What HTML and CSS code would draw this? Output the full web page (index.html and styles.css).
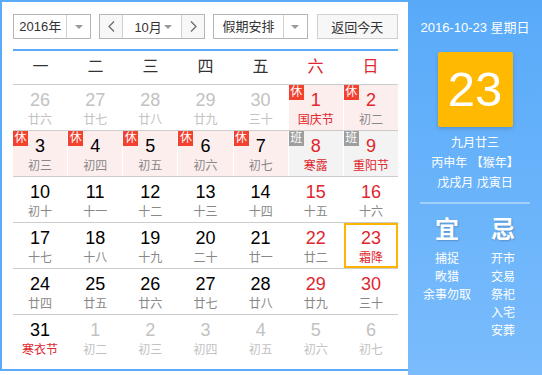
FILE: index.html
```html
<!DOCTYPE html>
<html lang="zh">
<head>
<meta charset="utf-8">
<link rel="stylesheet" href="styles.css">
</head>
<body>
<div class="widget">
  <div class="main">
    <div class="toolbar">
      <div class="select year">
        <span class="sel-text">2016年</span>
        <span class="sel-arrow"><i class="tri"></i></span>
      </div>
      <div class="month-group">
        <span class="nav-btn"><svg width="7" height="11" viewBox="0 0 7 11"><polyline points="6,0.5 1,5.5 6,10.5" fill="none" stroke="#666" stroke-width="1.2"/></svg></span>
        <span class="month"><span class="m-text">10月</span><i class="tri"></i></span>
        <span class="nav-btn"><svg width="7" height="11" viewBox="0 0 7 11"><polyline points="1,0.5 6,5.5 1,10.5" fill="none" stroke="#666" stroke-width="1.2"/></svg></span>
      </div>
      <div class="select holiday">
        <span class="sel-text">假期安排</span>
        <span class="sel-arrow"><i class="tri"></i></span>
      </div>
      <div class="today-btn">返回今天</div>
    </div>
    <div class="blue-line"></div>
    <div class="week">
      <span>一</span><span>二</span><span>三</span><span>四</span><span>五</span><span class="red">六</span><span class="red">日</span>
    </div>
    <div class="grid">
      <div class="row">
        <div class="cell muted"><b>26</b><em>廿六</em></div>
        <div class="cell muted"><b>27</b><em>廿七</em></div>
        <div class="cell muted"><b>28</b><em>廿八</em></div>
        <div class="cell muted"><b>29</b><em>廿九</em></div>
        <div class="cell muted"><b>30</b><em>三十</em></div>
        <div class="cell rest wkd fest"><span class="tag">休</span><b>1</b><em>国庆节</em></div>
        <div class="cell rest wkd"><span class="tag">休</span><b>2</b><em>初二</em></div>
      </div>
      <div class="row">
        <div class="cell rest"><span class="tag">休</span><b>3</b><em>初三</em></div>
        <div class="cell rest"><span class="tag">休</span><b>4</b><em>初四</em></div>
        <div class="cell rest"><span class="tag">休</span><b>5</b><em>初五</em></div>
        <div class="cell rest"><span class="tag">休</span><b>6</b><em>初六</em></div>
        <div class="cell rest"><span class="tag">休</span><b>7</b><em>初七</em></div>
        <div class="cell work wkd fest"><span class="tag gray">班</span><b>8</b><em>寒露</em></div>
        <div class="cell work wkd fest"><span class="tag gray">班</span><b>9</b><em>重阳节</em></div>
      </div>
      <div class="row">
        <div class="cell"><b>10</b><em>初十</em></div>
        <div class="cell"><b>11</b><em>十一</em></div>
        <div class="cell"><b>12</b><em>十二</em></div>
        <div class="cell"><b>13</b><em>十三</em></div>
        <div class="cell"><b>14</b><em>十四</em></div>
        <div class="cell wkd"><b>15</b><em>十五</em></div>
        <div class="cell wkd"><b>16</b><em>十六</em></div>
      </div>
      <div class="row">
        <div class="cell"><b>17</b><em>十七</em></div>
        <div class="cell"><b>18</b><em>十八</em></div>
        <div class="cell"><b>19</b><em>十九</em></div>
        <div class="cell"><b>20</b><em>二十</em></div>
        <div class="cell"><b>21</b><em>廿一</em></div>
        <div class="cell wkd"><b>22</b><em>廿二</em></div>
        <div class="cell wkd fest today"><b>23</b><em>霜降</em></div>
      </div>
      <div class="row">
        <div class="cell"><b>24</b><em>廿四</em></div>
        <div class="cell"><b>25</b><em>廿五</em></div>
        <div class="cell"><b>26</b><em>廿六</em></div>
        <div class="cell"><b>27</b><em>廿七</em></div>
        <div class="cell"><b>28</b><em>廿八</em></div>
        <div class="cell wkd"><b>29</b><em>廿九</em></div>
        <div class="cell wkd"><b>30</b><em>三十</em></div>
      </div>
      <div class="row last">
        <div class="cell fest"><b>31</b><em>寒衣节</em></div>
        <div class="cell muted"><b>1</b><em>初二</em></div>
        <div class="cell muted"><b>2</b><em>初三</em></div>
        <div class="cell muted"><b>3</b><em>初四</em></div>
        <div class="cell muted"><b>4</b><em>初五</em></div>
        <div class="cell muted"><b>5</b><em>初六</em></div>
        <div class="cell muted"><b>6</b><em>初七</em></div>
      </div>
    </div>
  </div>
  <div class="side">
    <div class="side-date">2016-10-23 星期日</div>
    <div class="big-day">23</div>
    <div class="lunar">
      <div>九月廿三</div>
      <div>丙申年 【猴年】</div>
      <div>戊戌月 戊寅日</div>
    </div>
    <div class="side-line"></div>
    <div class="yiji">
      <div class="col">
        <div class="head">宜</div>
        <div>捕捉</div>
        <div>畋猎</div>
        <div>余事勿取</div>
      </div>
      <div class="col">
        <div class="head">忌</div>
        <div>开市</div>
        <div>交易</div>
        <div>祭祀</div>
        <div>入宅</div>
        <div>安葬</div>
      </div>
    </div>
  </div>
</div>
</body>
</html>
```
FILE: styles.css
```css
* { box-sizing: border-box; }
html, body { margin: 0; padding: 0; background: #fff; }
body {
  font-family: "Liberation Sans", "Noto Sans CJK SC", sans-serif;
  color: #333;
}
.widget {
  display: flex;
  align-items: flex-start;
  width: 542px;
}
.main {
  width: 408px;
  height: 371px;
  border: 2px solid #5aabf9;
  border-right: none;
  padding: 12px 10px 0 11px;
}
.toolbar {
  display: flex;
  height: 25px;
  font-size: 13px;
  color: #333;
}
.select {
  display: flex;
  height: 25px;
  border: 1px solid #b5b5b5;
  background: #fff;
}
.year { width: 79px; }
.holiday { width: 95px; margin-left: 8px; }
.sel-text {
  flex: 1;
  display: flex;
  align-items: center;
  justify-content: center;
  border-right: 1px solid #d2d2d2;
  line-height: 23px;
}
.sel-arrow {
  width: 23px;
  display: flex;
  align-items: center;
  justify-content: center;
}
.tri {
  display: block;
  width: 0;
  height: 0;
  border-left: 4px solid transparent;
  border-right: 4px solid transparent;
  border-top: 4px solid #999;
}
.month-group {
  display: flex;
  height: 25px;
  margin-left: 8px;
  border: 1px solid #b5b5b5;
}
.nav-btn {
  width: 22px;
  display: flex;
  align-items: center;
  justify-content: center;
  background: #f7f7f7;
}
.month {
  width: 60px;
  display: flex;
  align-items: center;
  justify-content: space-between;
  padding: 0 9px 0 11px;
  border-left: 1px solid #d2d2d2;
  border-right: 1px solid #d2d2d2;
  background: #fff;
}
.today-btn {
  width: 82px;
  height: 25px;
  margin-left: 9px;
  border: 1px solid #d0d0d0;
  background: #f7f7f7;
  display: flex;
  align-items: center;
  justify-content: center;
}
.blue-line {
  height: 2px;
  margin-top: 10px;
  width: 385px;
  background: #5aabf9;
}
.week {
  display: grid;
  grid-template-columns: repeat(7, 1fr);
  width: 385px;
  height: 34px;
  border-bottom: 1px solid #cccccc;
  font-size: 16px;
  color: #333;
  text-align: center;
  line-height: 32px;
}
.red { color: #e0262e; }
.grid { width: 385px; }
.row {
  display: grid;
  grid-template-columns: repeat(7, 1fr);
  column-gap: 1px;
  height: 46px;
  border-bottom: 1px solid #cccccc;
}
.row.last { border-bottom: none; height: 45px; }
.cell {
  position: relative;
  text-align: center;
  padding-top: 5px;
}
.cell b {
  display: block;
  font-weight: normal;
  font-size: 18px;
  line-height: 20px;
  color: #000;
}
.cell em {
  display: block;
  font-style: normal;
  font-size: 12px;
  line-height: 16px;
  margin-top: 2px;
  color: #888;
}
.cell.wkd b { color: #e0262e; }
.cell.fest em { color: #e0262e; }
.cell.muted b, .cell.muted em { color: #c2c2c2; }
.cell.rest { background: #fdeeee; }
.cell.work { background: #f3f3f3; }
.cell.today { box-shadow: inset 0 0 0 2px #ffb400; }
.tag {
  position: absolute;
  left: 0;
  top: 0;
  width: 15px;
  height: 15px;
  background: #f2412f;
  color: #fff;
  font-size: 12px;
  line-height: 15px;
  text-align: center;
}
.tag.gray { background: #9e9e9e; }
.side {
  width: 134px;
  height: 375px;
  background: linear-gradient(#58aaf9, #7abcfc);
  color: #fff;
  display: flex;
  flex-direction: column;
  align-items: center;
}
.side-date {
  margin-top: 19px;
  font-size: 13px;
  line-height: 18px;
}
.big-day {
  margin-top: 15px;
  width: 75px;
  height: 75px;
  background: #ffb900;
  border-radius: 2px;
  box-shadow: 0 2px 4px rgba(0, 0, 0, 0.15);
  font-size: 49px;
  line-height: 75px;
  text-align: center;
  color: #fff;
}
.lunar {
  margin-top: 6px;
  font-size: 12px;
  line-height: 20px;
  text-align: center;
}
.side-line {
  margin-top: 9px;
  width: 110px;
  height: 2px;
  background: #a3cffb;
}
.yiji {
  display: flex;
  margin-top: 11px;
  font-size: 12px;
  line-height: 18px;
}
.col {
  width: 56px;
  text-align: center;
}
.col .head {
  font-size: 24px;
  font-weight: bold;
  line-height: 30px;
  margin-bottom: 5px;
  text-shadow: 1px 1px 2px rgba(0, 0, 0, 0.2);
}
```
